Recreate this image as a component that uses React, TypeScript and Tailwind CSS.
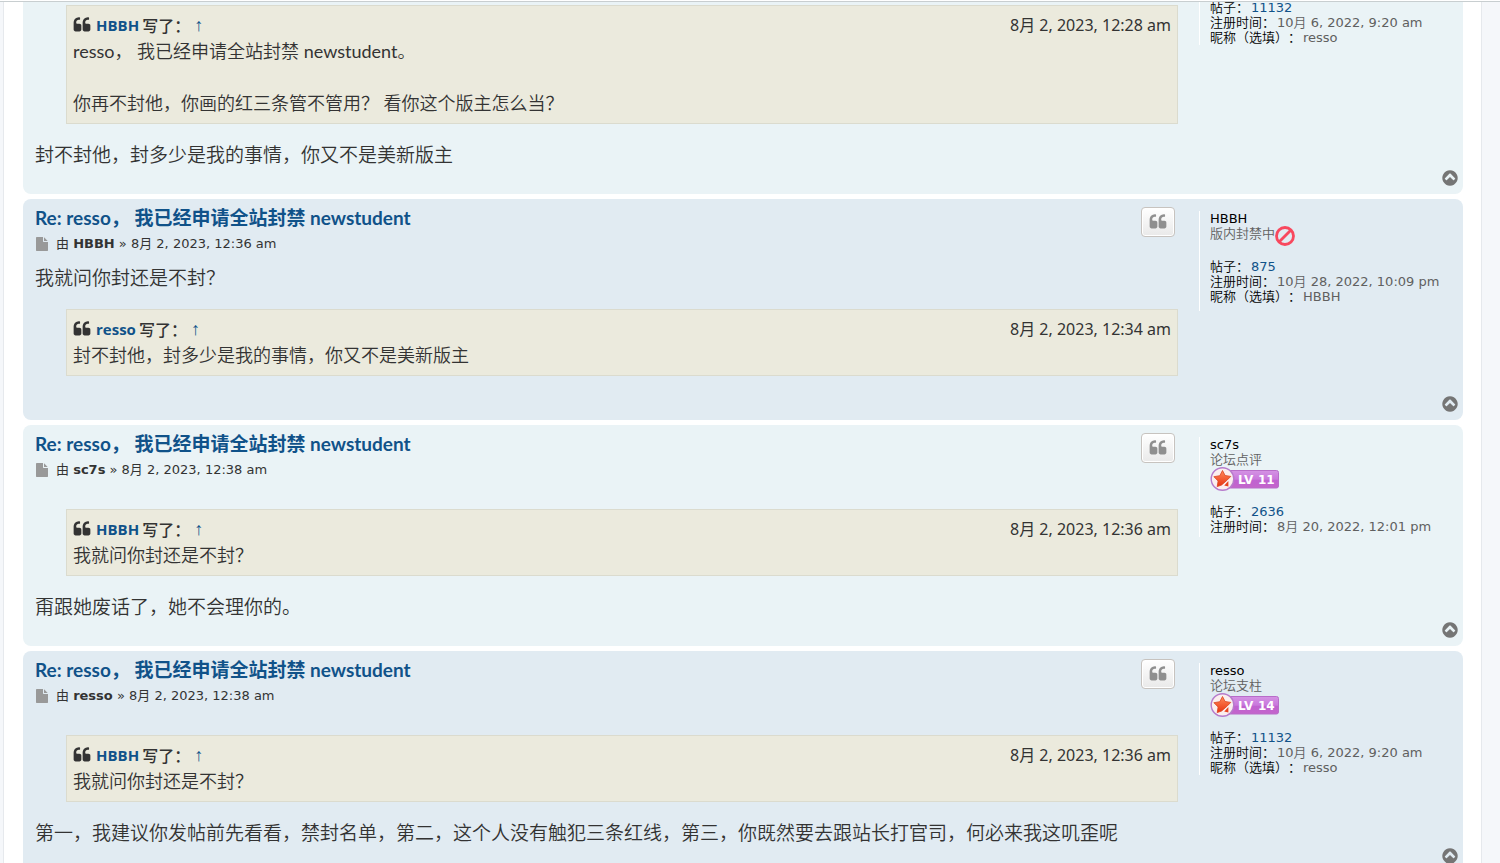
import React from "react";

type Rank = { title: string; level?: number; banned?: boolean };

type Profile = {
  name: string;
  rank: Rank;
  posts: string;
  joined: string;
  nickname?: string;
};

type QuoteData = { author: string; date: string; lines: string[] };

type PostData = {
  id: string;
  date: string;
  profile: Profile;
  before?: string;
  quote: QuoteData;
  after?: string;
};

const TITLE = "Re: resso， 我已经申请全站封禁 newstudent";

const resso: Profile = {
  name: "resso",
  rank: { title: "论坛支柱", level: 14 },
  posts: "11132",
  joined: "10月 6, 2022, 9:20 am",
  nickname: "resso",
};

const hbbh: Profile = {
  name: "HBBH",
  rank: { title: "版内封禁中", banned: true },
  posts: "875",
  joined: "10月 28, 2022, 10:09 pm",
  nickname: "HBBH",
};

const sc7s: Profile = {
  name: "sc7s",
  rank: { title: "论坛点评", level: 11 },
  posts: "2636",
  joined: "8月 20, 2022, 12:01 pm",
};

const posts: PostData[] = [
  {
    id: "p2",
    date: "8月 2, 2023, 12:36 am",
    profile: hbbh,
    before: "我就问你封还是不封？",
    quote: {
      author: "resso",
      date: "8月 2, 2023, 12:34 am",
      lines: ["封不封他，封多少是我的事情，你又不是美新版主"],
    },
  },
  {
    id: "p3",
    date: "8月 2, 2023, 12:38 am",
    profile: sc7s,
    quote: {
      author: "HBBH",
      date: "8月 2, 2023, 12:36 am",
      lines: ["我就问你封还是不封？"],
    },
    after: "甭跟她废话了，她不会理你的。",
  },
  {
    id: "p4",
    date: "8月 2, 2023, 12:38 am",
    profile: resso,
    quote: {
      author: "HBBH",
      date: "8月 2, 2023, 12:36 am",
      lines: ["我就问你封还是不封？"],
    },
    after:
      "第一，我建议你发帖前先看看，禁封名单，第二，这个人没有触犯三条红线，第三，你既然要去跟站长打官司，何必来我这叽歪呢",
  },
];

const QuoteIcon = ({ className }: { className: string }) => (
  <svg viewBox="0 0 1792 1792" className={className} fill="currentColor" aria-hidden="true">
    <path d="M832 960v384q0 80-56 136t-136 56h-384q-80 0-136-56t-56-136v-704q0-104 40.5-198.5t109.5-163.5 163.5-109.5 198.5-40.5h64q26 0 45 19t19 45v128q0 26-19 45t-45 19h-64q-106 0-181 75t-75 181v32q0 40 28 68t68 28h224q80 0 136 56t56 136zm896 0v384q0 80-56 136t-136 56h-384q-80 0-136-56t-56-136v-704q0-104 40.5-198.5t109.5-163.5 163.5-109.5 198.5-40.5h64q26 0 45 19t19 45v128q0 26-19 45t-45 19h-64q-106 0-181 75t-75 181v32q0 40 28 68t68 28h224q80 0 136 56t56 136z" />
  </svg>
);

const FileIcon = () => (
  <svg viewBox="0 0 1792 1792" className="size-[14px] text-[#999999]" fill="currentColor" aria-hidden="true">
    <path d="M1152 512v-472q22 14 36 28l408 408q14 14 28 36h-472zm-128 32q0 40 28 68t68 28h544v1056q0 40-28 68t-68 28h-1344q-40 0-68-28t-28-68v-1600q0-40 28-68t68-28h800v544z" />
  </svg>
);

const TopIcon = () => (
  <svg viewBox="0 0 1792 1792" className="size-[18px]" fill="currentColor" aria-hidden="true">
    <path d="M1293 1101l102-102q19-19 19-45t-19-45l-454-454q-19-19-45-19t-45 19l-454 454q-19 19-19 45t19 45l102 102q19 19 45 19t45-19l307-307 307 307q19 19 45 19t45-19zm371-205q0 209-103 385.5t-279.5 279.5-385.5 103-385.5-103-279.5-279.5-103-385.5 103-385.5 279.5-279.5 385.5-103 385.5 103 279.5 279.5 103 385.5z" />
  </svg>
);

const BanIcon = () => (
  <svg viewBox="0 0 20 20" className="size-5" fill="none" stroke="#f8485e" aria-hidden="true">
    <circle cx="10" cy="10" r="8.5" strokeWidth="2.8" />
    <path d="M4 16L16 4" strokeWidth="2.8" />
  </svg>
);

const LevelBadge = ({ level }: { level: number }) => (
  <svg viewBox="0 0 69 24" className="h-6 w-[69px]" role="img" aria-label={`LV ${level}`}>
    <defs>
      <linearGradient id={`bar-${level}`} x1="0" y1="0" x2="0" y2="1">
        <stop offset="0" stopColor="#d493e4" />
        <stop offset="0.5" stopColor="#c978dc" />
        <stop offset="0.55" stopColor="#bf62d0" />
        <stop offset="1" stopColor="#c465cb" />
      </linearGradient>
      <linearGradient id={`star-${level}`} x1="0" y1="0" x2="0" y2="1">
        <stop offset="0" stopColor="#ff8a5c" />
        <stop offset="1" stopColor="#e8330f" />
      </linearGradient>
    </defs>
    <rect x="12.5" y="3.5" width="56" height="17.5" rx="2" fill={`url(#bar-${level})`} stroke="#b86cc9" />
    <circle cx="12.5" cy="12" r="11.3" fill="#fbeeee" stroke="#b67bcb" strokeWidth="1.4" />
    <path
      d="M12.5 3.5l2.6 5 5.7.9-4 4-5.2 4.6-4.4 1.6.9-5.6-4.2-4.3 5.9-1z"
      fill={`url(#star-${level})`}
      stroke="#d9431f"
      strokeWidth="0.8"
      strokeLinejoin="round"
    />
    <path d="M14.2 18.6l4.2-4.6v5.4z" fill="#e8431f" />
    <g fill="#ffffff" fontFamily="DejaVu Sans, sans-serif" fontSize="12" fontWeight="700">
      <text x="28" y="17">
        LV
      </text>
      <text x="48" y="17">
        {level}
      </text>
    </g>
  </svg>
);

const Quote = ({ quote }: { quote: QuoteData }) => (
  <blockquote className="my-[18px] ml-[31px] border border-[#dbdbce] bg-[#ebeadd] px-[6px] pt-[6px] pb-[7px] text-[18px] leading-[26px]">
    <div className="flex items-center justify-between text-[16px]">
      <cite className="flex items-center font-bold not-italic">
        <QuoteIcon className="mr-[5px] size-[18px]" />
        <a href="#profile" className="font-['Open_Sans',sans-serif] text-[15px] text-[#105289] hover:underline">
          {quote.author}
        </a>
        <span className="ml-[3px] font-['Noto_Sans_CJK_SC',sans-serif] font-medium">写了：</span>
        <a
          href="#quoted"
          aria-label="查看原帖"
          className="ml-1 font-['Liberation_Serif',serif] text-[18px] font-normal text-[#105289]"
        >
          ↑
        </a>
      </cite>
      <span className="font-['Noto_Sans','Noto_Sans_CJK_SC',sans-serif]">{quote.date}</span>
    </div>
    {quote.lines.map((line, i) => (
      <p key={i} className="min-h-[26px]">
        {line}
      </p>
    ))}
  </blockquote>
);

const Stats = ({ profile }: { profile: Profile }) => (
  <dl className="text-[#606060] [text-spacing-trim:space-all] [&_dd]:ml-[2px] [&_dd]:inline [&_dt]:inline [&_dt]:text-black">
    <div>
      <dt>帖子：</dt>
      <dd>
        <a href="#posts" className="text-[#105289] hover:underline">
          {profile.posts}
        </a>
      </dd>
    </div>
    <div>
      <dt>注册时间：</dt>
      <dd>{profile.joined}</dd>
    </div>
    {profile.nickname && (
      <div>
        <dt>昵称（选填）：</dt>
        <dd>{profile.nickname}</dd>
      </div>
    )}
  </dl>
);

const TopLink = () => (
  <a
    href="#top"
    aria-label="页首"
    className="absolute right-1 bottom-[7px] text-[#757575] hover:text-[#105289]"
  >
    <TopIcon />
  </a>
);

const profileClass =
  "w-[264px] shrink-0 self-start border-l border-white pl-[10px] font-['DejaVu_Sans','Noto_Sans_CJK_SC_DemiLight','Noto_Sans_CJK_SC',sans-serif] text-[13px] leading-[15px]";

const Post = ({ post, shaded }: { post: PostData; shaded: boolean }) => {
  const { profile, quote } = post;
  return (
    <article
      id={post.id}
      className={`relative flex rounded-lg pl-3 ${shaded ? "bg-[#e1ebf2]" : "bg-[#eaf3f6]"}`}
    >
      <div className="min-w-0 flex-1 pr-[21px] pb-[26px]">
        <header className="flex h-[66px] items-start justify-between">
          <div className="pt-[7px]">
            <h3 className="font-['Lato','Noto_Sans_CJK_SC',sans-serif] text-[19px] leading-6 font-bold">
              <a href={`#${post.id}`} className="text-[#105289] hover:underline">
                {TITLE}
              </a>
            </h3>
            <p className="mt-1 flex items-center font-['DejaVu_Sans','Noto_Sans_CJK_SC',sans-serif] text-[13px] leading-5">
              <FileIcon />
              <span className="ml-[7px]">
                由 <strong>{profile.name}</strong> » {post.date}
              </span>
            </p>
          </div>
          <button
            type="button"
            aria-label="引用回复"
            className="mt-2 mr-[3px] flex h-[30px] w-[34px] items-center justify-center rounded border border-[#c7c3bf] bg-linear-to-b from-white to-[#e9e9e9] text-[#8f8f8f] shadow-[0_0_0_1px_#ffffff_inset]"
          >
            <QuoteIcon className="size-[18px]" />
          </button>
        </header>
        {post.before && <p>{post.before}</p>}
        <Quote quote={quote} />
        {post.after && <p>{post.after}</p>}
      </div>
      <aside className={`mt-3 min-h-[100px] ${profileClass}`}>
        <a href="#profile" className="block text-black hover:underline">
          {profile.name}
        </a>
        <div className="mb-[13px] text-[#606060]">
          {profile.rank.banned ? (
            <div className="flex items-start">
              {profile.rank.title}
              <BanIcon />
            </div>
          ) : (
            <div>{profile.rank.title}</div>
          )}
          {profile.rank.level && <LevelBadge level={profile.rank.level} />}
        </div>
        <Stats profile={profile} />
      </aside>
      <TopLink />
    </article>
  );
};

const App: React.FC = () => {
  return (
    <div className="h-screen overflow-hidden bg-[#f5f7fa] pr-[18px] pl-[3px] font-['Lato','Noto_Sans_CJK_SC_DemiLight','Noto_Sans_CJK_SC_Light','Noto_Sans_CJK_SC',sans-serif] text-[19px] leading-[26px] text-[#333333]">
      <div className="fixed inset-x-0 top-0 z-10 h-[2px] border-b border-[#c8ced0] bg-white" />
      <main className="flex min-h-screen flex-col gap-[5px] border-x border-[#e6e9ed] bg-white px-[18px] pl-[19px]">
        {/* tail of the post that is scrolled past the top edge */}
        <article className="relative flex rounded-b-lg bg-[#eaf3f6] pl-3">
          <div className="-mt-[13px] min-w-0 flex-1 pr-[21px] pb-[26px]">
            <Quote
              quote={{
                author: "HBBH",
                date: "8月 2, 2023, 12:28 am",
                lines: [
                  "resso， 我已经申请全站封禁 newstudent。",
                  "",
                  "你再不封他，你画的红三条管不管用？ 看你这个版主怎么当？",
                ],
              }}
            />
            <p>封不封他，封多少是我的事情，你又不是美新版主</p>
          </div>
          <aside className={profileClass}>
            <Stats profile={resso} />
          </aside>
          <TopLink />
        </article>
        {posts.map((post, i) => (
          <Post key={post.id} post={post} shaded={i % 2 === 0} />
        ))}
      </main>
    </div>
  );
};

export default App;
